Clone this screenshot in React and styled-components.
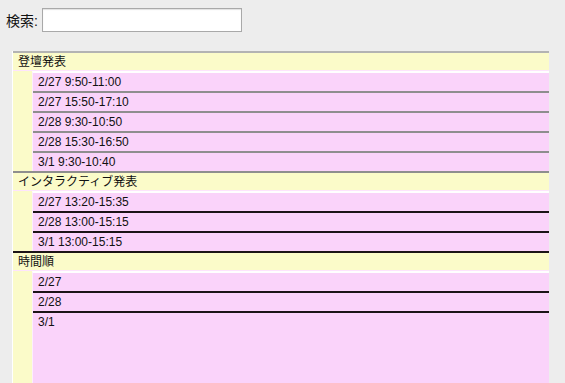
import React from "react";
import styled, { createGlobalStyle } from "styled-components";

const GlobalStyle = createGlobalStyle`
  html, body {
    margin: 0;
    padding: 0;
    background: #ededed;
  }
  body {
    font-family: "Liberation Sans", "Noto Sans CJK JP", sans-serif;
    color: #111;
  }
`;

const Page = styled.div`
  padding: 8px 0 0 6px;
  height: 383px;
  box-sizing: border-box;
  overflow: hidden;
`;

const SearchRow = styled.label`
  display: flex;
  align-items: center;
  gap: 4px;
  height: 24px;
  font-size: 14px;
`;

const SearchInput = styled.input`
  width: 200px;
  height: 24px;
  box-sizing: border-box;
  border: 1px solid #a9a9a9;
  box-shadow: inset 0 1px 1px rgba(0, 0, 0, 0.12);
  background: #fff;
  margin: 0;
  padding: 2px 4px;
  font: inherit;
  outline: none;
`;

const Sessions = styled.ul`
  list-style: none;
  margin: 19px 0 0 6px;
  padding: 0;
  width: 536px;
  border-left: 1px solid #fff;
  background: #fbfbc9;
`;

const Group = styled.li`
  border-top: 2px solid ${(p) => p.$top};
`;

const GroupTitle = styled.div`
  height: 17px;
  line-height: 18px;
  padding-left: 5px;
  font-size: 12px;
  border-bottom: 1px solid #fde4fd;
`;

const Slots = styled.ul`
  list-style: none;
  margin: 0 0 0 19px;
  padding: 0;
  border-top: 2px solid #fff;
  border-left: 1px solid #fdeefd;
  background: #fad3fa;
`;

const Slot = styled.li`
  height: ${(p) => (p.$tall ? "90px" : "18px")};
  line-height: 18px;
  padding-left: 5px;
  font-size: 12px;
  border-bottom: 2px solid ${(p) => p.$line};

  &:last-child {
    border-bottom: none;
  }
`;

const groups = [
  {
    title: "登壇発表",
    top: "#b3b3b3",
    line: "#8e8e8e",
    slots: [
      "2/27 9:50-11:00",
      "2/27 15:50-17:10",
      "2/28 9:30-10:50",
      "2/28 15:30-16:50",
      "3/1 9:30-10:40",
    ],
  },
  {
    title: "インタラクティブ発表",
    top: "#8e8e8e",
    line: "#1c1417",
    slots: ["2/27 13:20-15:35", "2/28 13:00-15:15", "3/1 13:00-15:15"],
  },
  {
    title: "時間順",
    top: "#1c1417",
    line: "#1c1417",
    slots: ["2/27", "2/28", "3/1"],
    tallLast: true,
  },
];

export default function App() {
  return (
    <Page>
      <GlobalStyle />
      <SearchRow>
        検索:
        <SearchInput type="text" />
      </SearchRow>
      <Sessions>
        {groups.map((g) => (
          <Group key={g.title} $top={g.top}>
            <GroupTitle>{g.title}</GroupTitle>
            <Slots>
              {g.slots.map((s, i) => (
                <Slot
                  key={s}
                  $line={g.line}
                  $tall={g.tallLast && i === g.slots.length - 1}
                >
                  {s}
                </Slot>
              ))}
            </Slots>
          </Group>
        ))}
      </Sessions>
    </Page>
  );
}
